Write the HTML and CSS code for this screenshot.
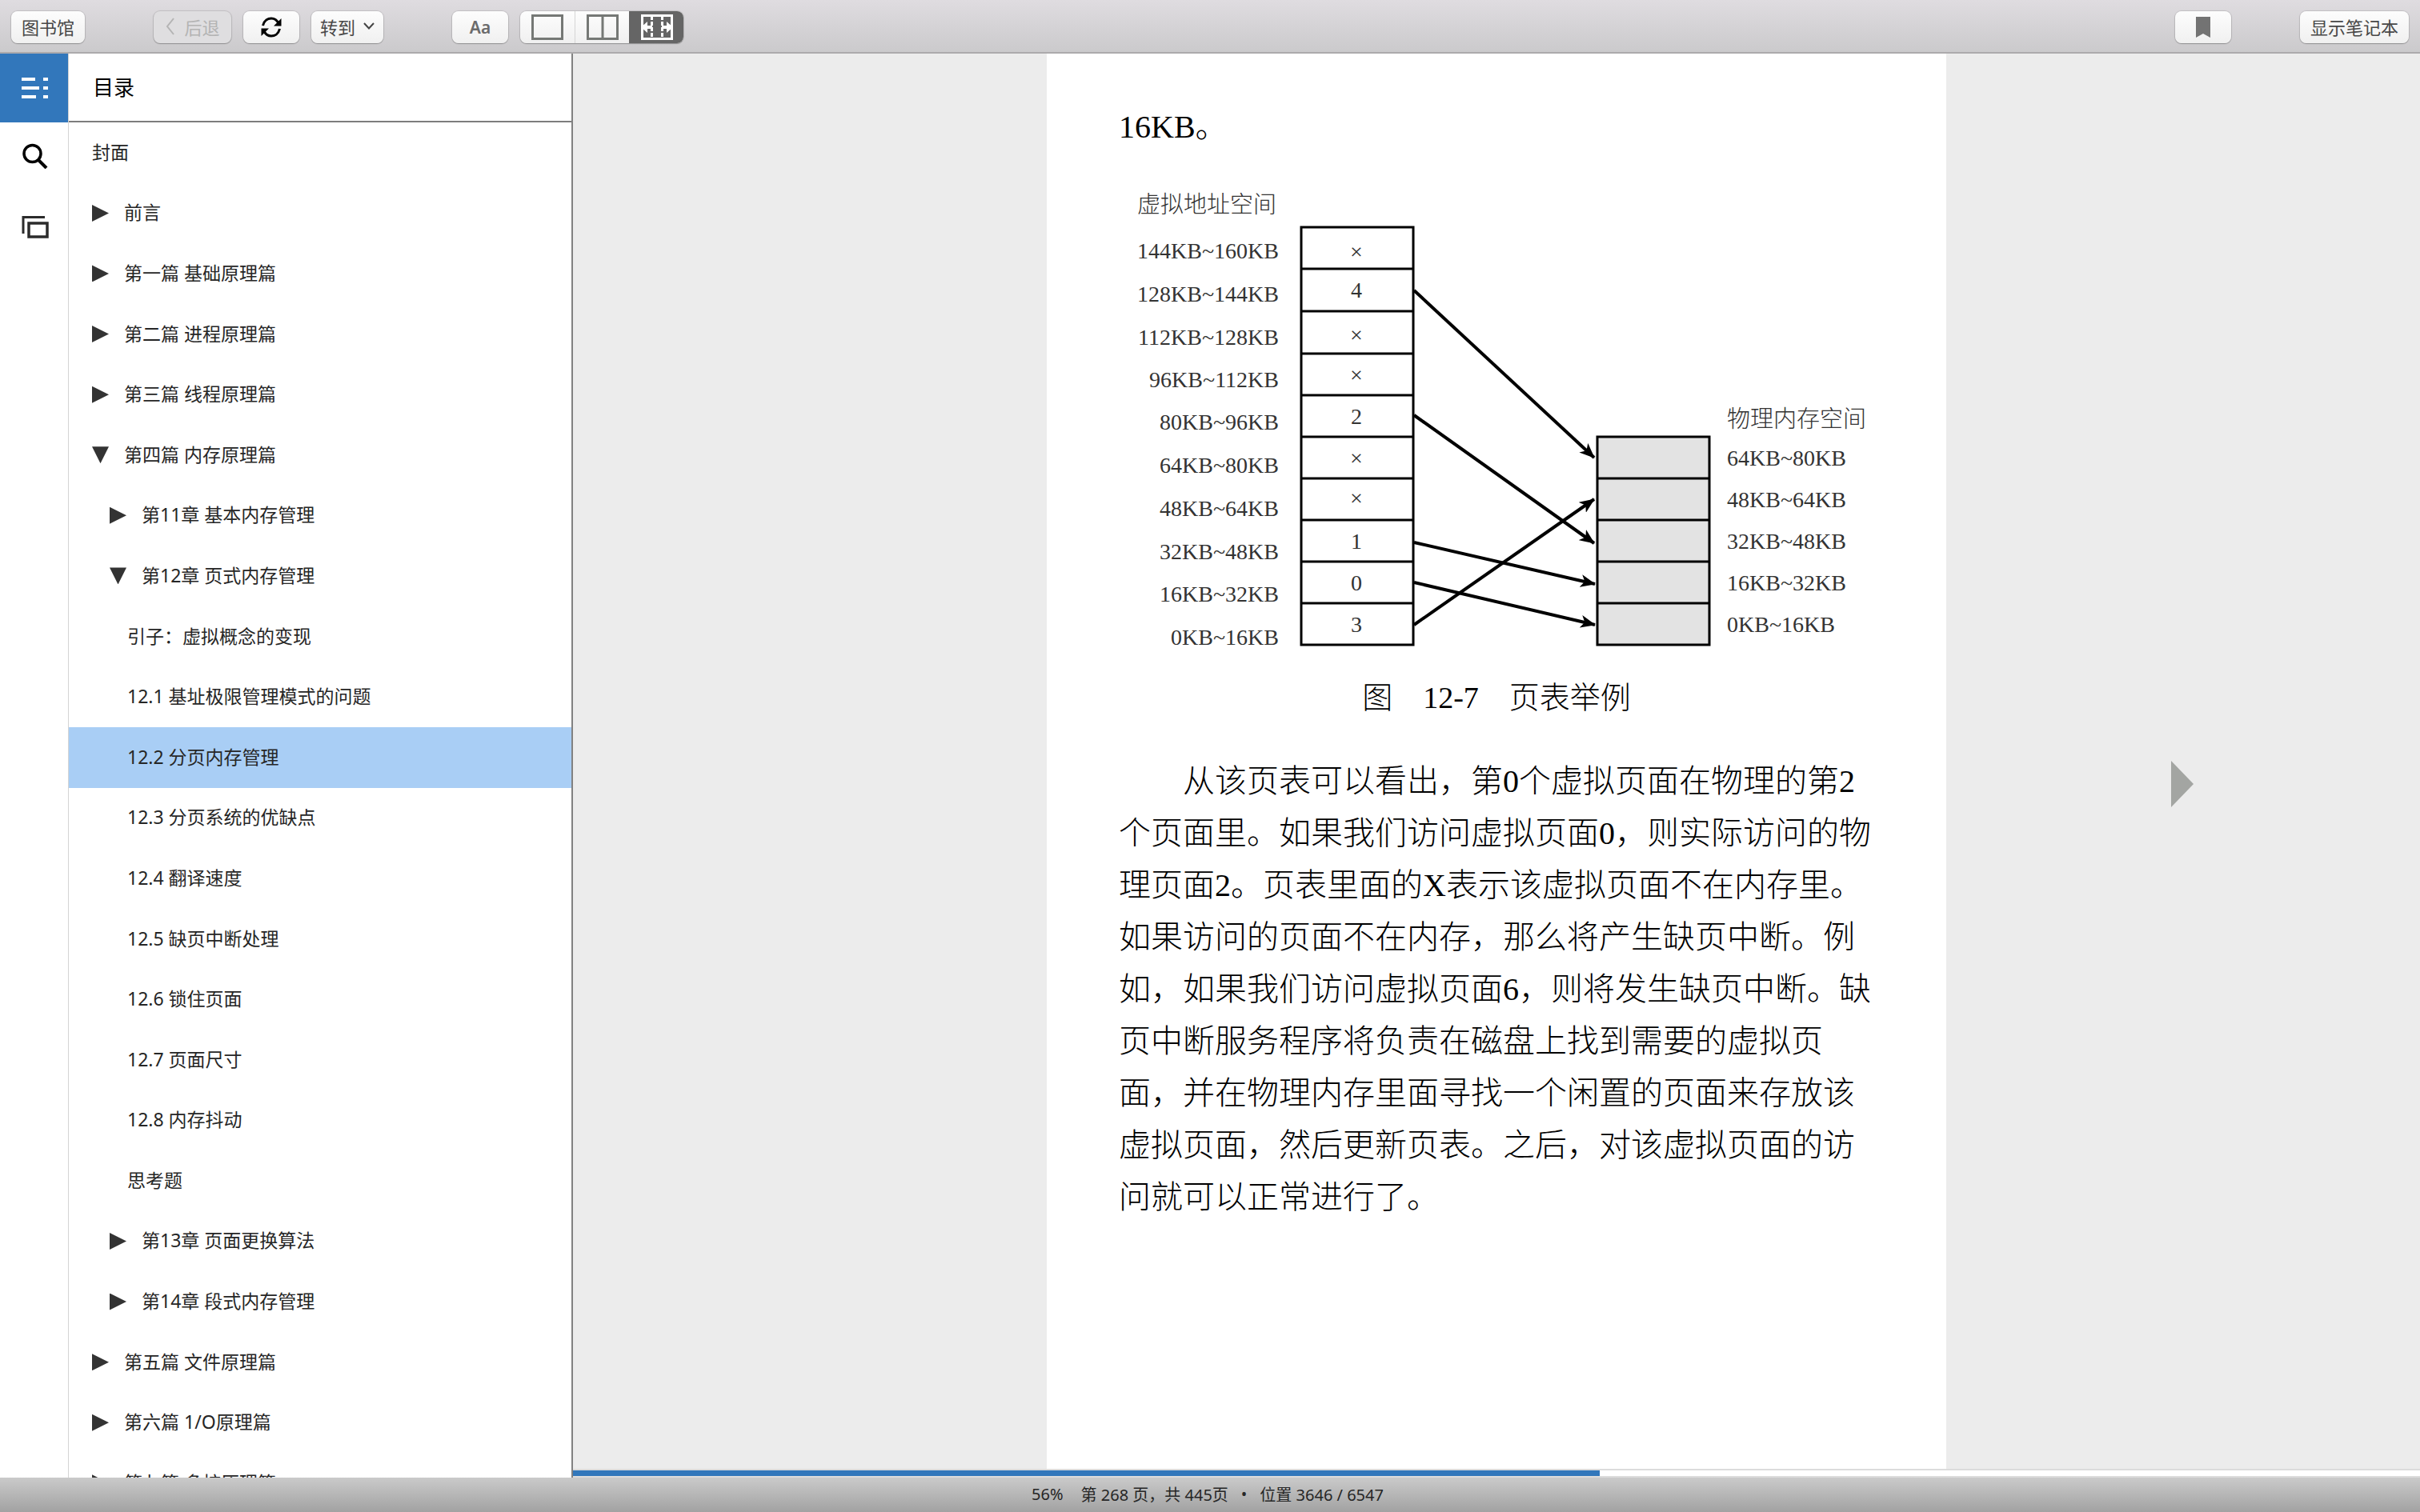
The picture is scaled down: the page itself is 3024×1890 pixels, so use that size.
FILE: index.html
```html
<!DOCTYPE html>
<html lang="zh-CN">
<head>
    <meta charset="UTF-8">
    <meta name="viewport" content="width=device-width, initial-scale=1.0">
    <title>第12章 页式内存管理</title>
    <link rel="stylesheet" href="styles.css">
</head>
<body>
    <!-- 顶部工具栏 -->
    <header class="toolbar">
        <button class="btn" type="button">图书馆</button>
        <div class="btn-group">
            <button class="btn btn-back" type="button" disabled>
                <svg width="12" height="22" viewBox="0 0 12 22"><path d="M10 1L2 11L10 21" fill="none" stroke="#b4b4b4" stroke-width="2"/></svg>
                后退
            </button>
            <button class="btn btn-icon" type="button" aria-label="同步">
                <svg width="26" height="26" viewBox="0 0 26 26">
                    <path d="M2.500 11C4 4.500 9 2 13 2C17 2 20 4 22 8" fill="none" stroke="#000" stroke-width="3"/>
                    <path d="M25.500 2V11.500H16Z"/>
                    <path d="M23.500 15C22 21.500 17 24 13 24C9 24 6 22 4 18" fill="none" stroke="#000" stroke-width="3"/>
                    <path d="M0.500 24V14.500H10Z"/>
                </svg>
            </button>
            <button class="btn btn-goto" type="button" aria-haspopup="true">
                转到
                <svg width="14" height="9" viewBox="0 0 14 9"><path d="M1 1L7 7.500L13 1" fill="none" stroke="#444" stroke-width="2"/></svg>
            </button>
        </div>
        <div class="btn-group">
            <button class="btn btn-icon btn-font" type="button">Aa</button>
            <div class="segments">
                <button class="segment" type="button" aria-label="单栏">
                    <svg width="40" height="32" viewBox="0 0 40 32"><rect x="1.500" y="1.500" width="37" height="29" fill="none" stroke="#757875" stroke-width="3"/></svg>
                </button>
                <button class="segment" type="button" aria-label="双栏">
                    <svg width="40" height="32" viewBox="0 0 40 32"><path d="M1.500 1.500H38.500V30.500H1.500ZM20 1.500V30.500" fill="none" stroke="#757875" stroke-width="3"/></svg>
                </button>
                <button class="segment active" type="button" aria-label="自动分栏" aria-pressed="true">
                    <svg width="40" height="32" viewBox="0 0 40 32">
                        <path d="M1.500 1.500H38.500V30.500H1.500Z" fill="none" stroke="#fff" stroke-width="3"/>
                        <path d="M13.500 2V30M26.500 2V30" stroke="#fff" stroke-width="3" stroke-dasharray="5 2"/>
                        <path d="M0 16L8 9V14H14V18H8V23ZM40 16L32 9V14H26V18H32V23Z" fill="#fff"/>
                    </svg>
                </button>
            </div>
        </div>
        <div class="toolbar-right">
            <button class="btn btn-icon" type="button" aria-label="书签">
                <svg width="18" height="26" viewBox="0 0 18 26"><path d="M0 0H18V26L9 21L0 26Z" fill="#737373"/></svg>
            </button>
            <button class="btn" type="button">显示笔记本</button>
        </div>
    </header>

    <div class="workspace">
        <!-- 左侧图标栏 -->
        <nav class="rail">
            <button class="rail-btn active" type="button" aria-label="目录">
                <svg width="34" height="26" viewBox="0 0 34 26" fill="#fff">
                    <path d="M0 0H17V4H0ZM0 11H22V15H0ZM0 22H18V26H0ZM27 0H33V4H27ZM27 11H33V15H27ZM27 22H33V26H27Z"/>
                </svg>
            </button>
            <button class="rail-btn" type="button" aria-label="搜索">
                <svg width="32" height="32" viewBox="0 0 32 32" fill="none" stroke="#000">
                    <circle cx="12.500" cy="13" r="10.500" stroke-width="3.500"/>
                    <path d="M20 21L30 31" stroke-width="4"/>
                </svg>
            </button>
            <button class="rail-btn" type="button" aria-label="卡片">
                <svg width="34" height="28" viewBox="0 0 34 28" fill="none" stroke="#2b2b2b">
                    <path d="M29 1.500H2V22" stroke-width="3"/>
                    <rect x="9" y="9" width="23" height="17" stroke-width="3.500"/>
                </svg>
            </button>
        </nav>

        <!-- 目录 -->
        <aside class="toc">
            <h2 class="toc-title">目录</h2>
            <ul class="toc-list">
                <li class="level-1"><a href="#">封面</a></li>
                <li class="level-1"><button class="toggle" type="button" aria-label="展开"></button><a href="#">前言</a></li>
                <li class="level-1"><button class="toggle" type="button" aria-label="展开"></button><a href="#">第一篇 基础原理篇</a></li>
                <li class="level-1"><button class="toggle" type="button" aria-label="展开"></button><a href="#">第二篇 进程原理篇</a></li>
                <li class="level-1"><button class="toggle" type="button" aria-label="展开"></button><a href="#">第三篇 线程原理篇</a></li>
                <li class="level-1"><button class="toggle open" type="button" aria-label="收起"></button><a href="#">第四篇 内存原理篇</a></li>
                <li class="level-2"><button class="toggle" type="button" aria-label="展开"></button><a href="#">第11章 基本内存管理</a></li>
                <li class="level-2"><button class="toggle open" type="button" aria-label="收起"></button><a href="#">第12章 页式内存管理</a></li>
                <li class="level-3"><a href="#">引子：虚拟概念的变现</a></li>
                <li class="level-3"><a href="#">12.1 基址极限管理模式的问题</a></li>
                <li class="level-3 selected"><a href="#">12.2 分页内存管理</a></li>
                <li class="level-3"><a href="#">12.3 分页系统的优缺点</a></li>
                <li class="level-3"><a href="#">12.4 翻译速度</a></li>
                <li class="level-3"><a href="#">12.5 缺页中断处理</a></li>
                <li class="level-3"><a href="#">12.6 锁住页面</a></li>
                <li class="level-3"><a href="#">12.7 页面尺寸</a></li>
                <li class="level-3"><a href="#">12.8 内存抖动</a></li>
                <li class="level-3"><a href="#">思考题</a></li>
                <li class="level-2"><button class="toggle" type="button" aria-label="展开"></button><a href="#">第13章 页面更换算法</a></li>
                <li class="level-2"><button class="toggle" type="button" aria-label="展开"></button><a href="#">第14章 段式内存管理</a></li>
                <li class="level-1"><button class="toggle" type="button" aria-label="展开"></button><a href="#">第五篇 文件原理篇</a></li>
                <li class="level-1"><button class="toggle" type="button" aria-label="展开"></button><a href="#">第六篇 1/O原理篇</a></li>
                <li class="level-1"><button class="toggle" type="button" aria-label="展开"></button><a href="#">第七篇 多核原理篇</a></li>
            </ul>
        </aside>

        <!-- 阅读区 -->
        <main class="reader">
            <div class="reader-body">
                <article class="page">
                    <p>16KB。</p>
                    <figure>
                        <svg class="diagram" width="944" height="600" viewBox="0 0 944 600">
                            <defs>
                                <marker id="arrow" markerUnits="userSpaceOnUse" markerWidth="20" markerHeight="16" refX="18" refY="8" orient="auto">
                                    <path d="M0 0L19 8L0 16L5 8Z"/>
                                </marker>
                            </defs>

                            <!-- 虚拟地址空间 -->
                            <g text-anchor="end">
                                <text class="diagram-title" x="197" y="46">虚拟地址空间</text>
                                <text x="200" y="103">144KB~160KB</text>
                                <text x="200" y="157">128KB~144KB</text>
                                <text x="200" y="211">112KB~128KB</text>
                                <text x="200" y="264">96KB~112KB</text>
                                <text x="200" y="317">80KB~96KB</text>
                                <text x="200" y="371">64KB~80KB</text>
                                <text x="200" y="425">48KB~64KB</text>
                                <text x="200" y="479">32KB~48KB</text>
                                <text x="200" y="532">16KB~32KB</text>
                                <text x="200" y="586">0KB~16KB</text>
                            </g>

                            <!-- 页表 -->
                            <path class="box" d="M228 64H368V586H228ZM228 116H368M228 169H368M228 222H368M228 274H368M228 326H368M228 378H368M228 430H368M228 482H368M228 534H368"/>
                            <g text-anchor="middle">
                                <text x="297" y="104">×</text>
                                <text x="297" y="152">4</text>
                                <text x="297" y="208">×</text>
                                <text x="297" y="258">×</text>
                                <text x="297" y="310">2</text>
                                <text x="297" y="362">×</text>
                                <text x="297" y="412">×</text>
                                <text x="297" y="466">1</text>
                                <text x="297" y="518">0</text>
                                <text x="297" y="570">3</text>
                            </g>

                            <!-- 映射关系 -->
                            <g class="links">
                                <path d="M369 143L594 352" marker-end="url(#arrow)"/>
                                <path d="M369 299L594 459" marker-end="url(#arrow)"/>
                                <path d="M369 458L595 510" marker-end="url(#arrow)"/>
                                <path d="M369 508L595 561" marker-end="url(#arrow)"/>
                                <path d="M369 561L594 404" marker-end="url(#arrow)"/>
                            </g>

                            <!-- 物理内存空间 -->
                            <path class="box filled" d="M598 326H738V586H598ZM598 378H738M598 430H738M598 482H738M598 534H738"/>
                            <text class="diagram-title" x="760" y="314">物理内存空间</text>
                            <text x="760" y="362">64KB~80KB</text>
                            <text x="760" y="414">48KB~64KB</text>
                            <text x="760" y="466">32KB~48KB</text>
                            <text x="760" y="518">16KB~32KB</text>
                            <text x="760" y="570">0KB~16KB</text>
                        </svg>
                        <figcaption>图　12-7　页表举例</figcaption>
                    </figure>
                    <p class="indent">从该页表可以看出，第0个虚拟页面在物理的第2个页面里。如果我们访问虚拟页面0，则实际访问的物理页面2。页表里面的X表示该虚拟页面不在内存里。如果访问的页面不在内存，那么将产生缺页中断。例如，如果我们访问虚拟页面6，则将发生缺页中断。缺页中断服务程序将负责在磁盘上找到需要的虚拟页面，并在物理内存里面寻找一个闲置的页面来存放该虚拟页面，然后更新页表。之后，对该虚拟页面的访问就可以正常进行了。</p>
                </article>
                <button class="next-page" type="button" aria-label="下一页">
                    <svg width="28" height="58" viewBox="0 0 28 58"><path d="M0 0L28 29L0 58Z" fill="#a3a5a2"/></svg>
                </button>
            </div>
            <div class="progress">
                <div class="progress-bar" style="width: 55.6%"></div>
            </div>
        </main>
    </div>

    <footer class="status">
        <span>56%</span>
        <span>第 268 页，共 445页</span>
        <span class="dot">•</span>
        <span>位置 3646 / 6547</span>
    </footer>
</body>
</html>
```
FILE: styles.css
```css
* {
    box-sizing: border-box;
}
body {
    font-family: "Noto Sans", "Noto Sans CJK SC", sans-serif;
    margin: 0;
    height: 100vh;
    display: flex;
    flex-direction: column;
    overflow: hidden;
    color: #262626;
}
button {
    font-family: inherit;
    padding: 0;
    border: none;
    background: none;
    cursor: pointer;
}
svg {
    display: block;
}

/* 工具栏 */
.toolbar {
    display: flex;
    align-items: center;
    gap: 86px;
    height: 67px;
    flex-shrink: 0;
    padding: 2px 14px 0;
    background: linear-gradient(#dfdce0, #cbcacc);
    border-bottom: 2px solid #acaaac;
}
.btn-group {
    display: flex;
    gap: 15px;
}
.toolbar-right {
    display: flex;
    gap: 86px;
    margin-left: auto;
}
.btn {
    display: flex;
    align-items: center;
    justify-content: center;
    height: 40px;
    padding: 0 13px 2px;
    border-radius: 8px;
    background: linear-gradient(#fdfdfd, #f0f0f0);
    box-shadow: 0 0 1px 1px rgba(0,0,0,0.12), 0 1px 1px rgba(0,0,0,0.2);
    color: #484848;
    font-size: 22px;
}
.btn-icon {
    width: 70px;
    padding: 0;
}
.btn-back {
    gap: 12px;
    width: 97px;
    padding: 0 0 2px;
    background: #dfdee0;
    color: #b4b4b4;
}
.btn-goto {
    gap: 10px;
    width: 90px;
    padding: 0 0 2px;
}
.btn-font {
    font-weight: 600;
    color: #6b6b6b;
    font-size: 21px;
}
.segments {
    display: flex;
    height: 40px;
    border-radius: 8px;
    overflow: hidden;
    background: linear-gradient(#fdfdfd, #f0f0f0);
    box-shadow: 0 0 1px 1px rgba(0,0,0,0.12), 0 1px 1px rgba(0,0,0,0.2);
}
.segment {
    display: flex;
    align-items: center;
    justify-content: center;
    width: 68px;
}
.segment + .segment {
    border-left: 1px solid #d5d5d5;
}
.segment.active {
    border-left-color: #656565;
    background: #656565;
}

.workspace {
    display: flex;
    flex: 1;
    min-height: 0;
}

/* 图标栏 */
.rail {
    width: 86px;
    flex-shrink: 0;
    border-right: 1px solid #d4d4d4;
    background: #fff;
}
.rail-btn {
    display: flex;
    align-items: center;
    justify-content: center;
    width: 100%;
    height: 83px;
    padding-left: 2px;
    margin-bottom: 6px;
}
.rail-btn.active {
    height: 86px;
    margin-bottom: 0;
    background: #3277bb;
}

/* 目录 */
.toc {
    width: 630px;
    flex-shrink: 0;
    display: flex;
    flex-direction: column;
    background: #fff;
    border-right: 2px solid #818181;
}
.toc-title {
    margin: 0;
    padding-left: 30px;
    height: 86px;
    line-height: 84px;
    flex-shrink: 0;
    border-bottom: 2px solid #7d7d7d;
    font-size: 26px;
    font-weight: 400;
    color: #000;
}
.toc-list {
    list-style: none;
    margin: 0;
    padding: 0;
    flex: 1;
    min-height: 0;
    overflow: hidden;
}
.toc-list li {
    display: flex;
    align-items: center;
    gap: 19px;
    height: 4vh;
    font-size: 23px;
}
.toc-list a {
    padding-bottom: 4px;
    color: inherit;
    text-decoration: none;
}
.level-1 {
    padding-left: 29px;
}
.level-2 {
    padding-left: 51px;
}
.level-3 {
    padding-left: 73px;
}
.toc-list .selected {
    background: #a9cef5;
}
.toggle {
    width: 21px;
    height: 21px;
    background: #333;
    clip-path: polygon(0 0, 100% 50%, 0 100%);
}
.toggle.open {
    clip-path: polygon(0 0, 100% 0, 50% 100%);
}

/* 阅读区 */
.reader {
    flex: 1;
    display: flex;
    flex-direction: column;
    background: #ececec;
}
.reader-body {
    position: relative;
    flex: 1;
    display: flex;
    justify-content: center;
}
.page {
    width: 1124px;
    padding: 59px 90px;
    background: #fff;
    color: #000;
    font-family: "Liberation Serif", "Noto Sans CJK SC", serif;
    font-size: 40px;
    font-weight: 300;
    line-height: 65px;
}
.page p {
    margin: 0;
}
.page .indent {
    text-indent: 2em;
}
figure {
    margin: 29px 0 39px;
}
.diagram {
    max-width: 100%;
    fill: #333;
    font-size: 28px;
}
.diagram-title {
    font-size: 29px;
}
.box {
    fill: none;
    stroke: #000;
    stroke-width: 3;
}
.box.filled {
    fill: #e3e3e3;
}
.links path {
    stroke: #000;
    stroke-width: 4;
}
.diagram marker path {
    fill: #000;
    stroke: none;
}
figcaption {
    margin-top: 20px;
    font-size: 38px;
    text-align: center;
}
.next-page {
    position: absolute;
    right: 283px;
    top: calc(50% + 28px);
    transform: translateY(-50%);
}
.progress {
    height: 11px;
    flex-shrink: 0;
    border-top: 2px solid #dcdcdc;
    border-bottom: 2px solid #dcdcdc;
    background: #fff;
}
.progress-bar {
    height: 100%;
    background: #3277bb;
}

/* 状态栏 */
.status {
    display: flex;
    align-items: center;
    justify-content: center;
    height: 43px;
    flex-shrink: 0;
    padding-right: 6px;
    background: linear-gradient(#cacaca, #a2a2a2);
    font-size: 20px;
}
.status span {
    padding-bottom: 2px;
}
.status span + span {
    margin-left: 22px;
}
.status .dot,
.status .dot + span {
    margin-left: 16px;
}
```
